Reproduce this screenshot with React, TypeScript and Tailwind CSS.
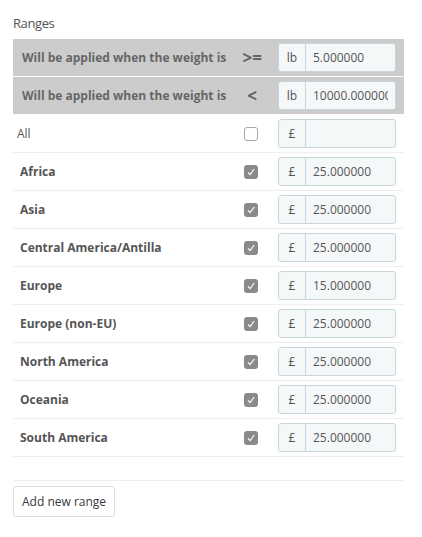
import React from "react";

const font = { fontFamily: '"Open Sans", "Noto Sans", sans-serif' };

function InputGroup({ addon, value }: { addon: string; value: string }) {
  return (
    <div className="flex h-[29px] w-[118px] rounded-[3px] border border-[#c7d6db] bg-[#f5f8f9] overflow-hidden">
      <div className="flex w-[27px] shrink-0 items-center justify-center border-r border-[#c7d6db] text-[12px] text-[#555]">
        {addon}
      </div>
      <input
        readOnly
        value={value}
        className="min-w-0 flex-1 bg-transparent px-[7px] text-[12px] text-[#555] outline-none"
        style={font}
      />
    </div>
  );
}

function Checkbox({ checked }: { checked: boolean }) {
  if (!checked) {
    return <div className="h-[14px] w-[14px] rounded-[3px] border border-[#aaa] bg-white" />;
  }
  return (
    <div className="flex h-[14px] w-[14px] items-center justify-center rounded-[3px] bg-[#8a8a8a]">
      <svg width="10" height="10" viewBox="0 0 10 10">
        <path d="M2 5.3 L4.1 7.6 L8.2 2" stroke="#fff" strokeWidth="1.2" fill="none" />
      </svg>
    </div>
  );
}

const zones = [
  "Africa",
  "Asia",
  "Central America/Antilla",
  "Europe",
  "Europe (non-EU)",
  "North America",
  "Oceania",
  "South America",
];
const values = ["25.000000", "25.000000", "25.000000", "15.000000", "25.000000", "25.000000", "25.000000", "25.000000"];

export default function App() {
  return (
    <div className="min-h-[537px] w-[422px] bg-white px-[13px]" style={font}>
      <div className="pt-[14px] pb-[7px] text-[13px] leading-[18px] tracking-[-0.4px] text-[#555]">
        Ranges
      </div>
      <div className="w-[391px]">
        {[
          { op: ">=", v: "5.000000" },
          { op: "<", v: "10000.000000" },
        ].map((r, i) => (
          <div key={i} className="flex h-[38px] items-center border-b border-white bg-[#cccccc]">
            <div className="flex-1 whitespace-nowrap pl-[9px] text-[12px] font-bold text-[#666]">
              Will be applied when the weight is
            </div>
            <div className="w-[52px] text-center text-[17px] font-bold text-[#666]">{r.op}</div>
            <div className="w-[126px] pr-[8px]">
              <InputGroup addon="lb" value={r.v} />
            </div>
          </div>
        ))}
        <div className="flex h-[38px] items-center border-b border-[#eee]">
          <div className="flex-1 pl-[4px] text-[12px] text-[#555]">All</div>
          <div className="flex w-[52px] justify-center pr-[3px]">
            <Checkbox checked={false} />
          </div>
          <div className="w-[126px] pr-[8px]">
            <InputGroup addon="£" value="" />
          </div>
        </div>
        {zones.map((z, i) => (
          <div key={z} className="flex h-[38px] items-center border-b border-[#eee]">
            <div className="flex-1 pl-[7px] text-[12px] font-bold text-[#555]">{z}</div>
            <div className="flex w-[52px] justify-center pr-[3px]">
              <Checkbox checked />
            </div>
            <div className="w-[126px] pr-[8px]">
              <InputGroup addon="£" value={values[i]} />
            </div>
          </div>
        ))}
        <div className="h-[24px] border-b border-[#eee]" />
      </div>
      <button className="mt-[5px] h-[31px] rounded-[3px] border border-[#ddd] bg-white px-[8px] text-[12px] text-[#363a41]" style={font}>
        Add new range
      </button>
    </div>
  );
}
